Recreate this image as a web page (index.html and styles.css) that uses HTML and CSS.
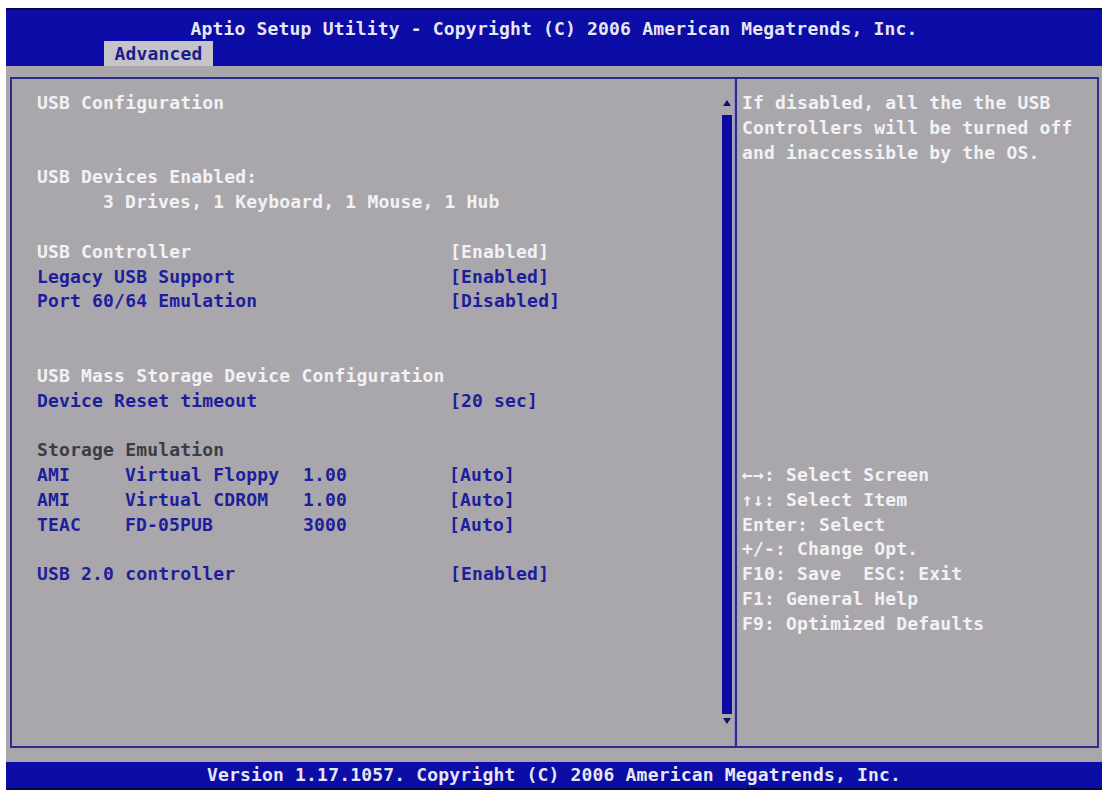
FILE: index.html
```html
<!DOCTYPE html>
<html lang="en">
<head>
    <meta charset="UTF-8">
    <meta name="viewport" content="width=device-width, initial-scale=1.0">
    <title>Aptio Setup Utility - Advanced</title>
    <link rel="stylesheet" href="styles.css">
</head>
<body>
    <div id="screen">
        <div id="titlebar">
            <div class="title">Aptio Setup Utility - Copyright (C) 2006 American Megatrends, Inc.</div>
            <div class="tabs">
                <div class="tab active">Advanced</div>
            </div>
        </div>

        <div id="workspace">
            <div id="frame">
                <div id="menu">
                    <div class="menu-items">
                        <div class="row text-white">USB Configuration</div>

                        <div class="row text-white skip2">USB Devices Enabled:</div>
                        <div class="row text-white indent">3 Drives, 1 Keyboard, 1 Mouse, 1 Hub</div>

                        <div class="row setting text-white skip1">
                            <span>USB Controller</span><span>[Enabled]</span>
                        </div>
                        <div class="row setting text-blue">
                            <span>Legacy USB Support</span><span>[Enabled]</span>
                        </div>
                        <div class="row setting text-blue">
                            <span>Port 60/64 Emulation</span><span>[Disabled]</span>
                        </div>

                        <div class="row text-white skip2">USB Mass Storage Device Configuration</div>
                        <div class="row setting text-blue">
                            <span>Device Reset timeout</span><span>[20 sec]</span>
                        </div>

                        <div class="row text-gray skip1">Storage Emulation</div>
                        <div class="row device text-blue">
                            <span>AMI</span><span>Virtual Floppy</span><span>1.00</span><span>[Auto]</span>
                        </div>
                        <div class="row device text-blue">
                            <span>AMI</span><span>Virtual CDROM</span><span>1.00</span><span>[Auto]</span>
                        </div>
                        <div class="row device text-blue">
                            <span>TEAC</span><span>FD-05PUB</span><span>3000</span><span>[Auto]</span>
                        </div>

                        <div class="row setting text-blue skip1">
                            <span>USB 2.0 controller</span><span>[Enabled]</span>
                        </div>
                    </div>

                    <div class="scrollbar">
                        <div class="arrow-up"></div>
                        <div class="thumb"></div>
                        <div class="arrow-down"></div>
                    </div>
                </div>

                <div id="help">
                    <div class="help-text">
                        <div class="row">If disabled, all the the USB</div>
                        <div class="row">Controllers will be turned off</div>
                        <div class="row">and inaccessible by the OS.</div>
                    </div>
                    <div class="keys">
                        <div class="row">&larr;&rarr;: Select Screen</div>
                        <div class="row">&uarr;&darr;: Select Item</div>
                        <div class="row">Enter: Select</div>
                        <div class="row">+/-: Change Opt.</div>
                        <div class="row">F10: Save  ESC: Exit</div>
                        <div class="row">F1: General Help</div>
                        <div class="row">F9: Optimized Defaults</div>
                    </div>
                </div>
            </div>
        </div>

        <div id="statusbar">Version 1.17.1057. Copyright (C) 2006 American Megatrends, Inc.</div>
    </div>
</body>
</html>
```

FILE: styles.css
```css
:root {
    --line: 24.8px;
    --bios-blue: #0c0ca6;
    --panel: #a9a7ac;
    --frame-line: #2c2c8c;
}

body {
    margin: 0;
    background: #fff;
    font-family: "DejaVu Sans Mono", "Liberation Mono", monospace;
    font-weight: bold;
    font-size: 18px;
    letter-spacing: 0.18px;
}

#screen {
    width: 1096px;
    margin-left: 6px;
    padding-top: 8px;
}

/* top bar */
#titlebar {
    height: 56px;
    background: var(--bios-blue);
    border-top: 2px solid #08084a;
}
#titlebar .title {
    padding-top: 7px;
    line-height: 24px;
    text-align: center;
    color: #e6e6f4;
}
#titlebar .tabs {
    display: flex;
    padding-left: 98px;
}
#titlebar .tab {
    width: 109px;
    height: 25px;
    line-height: 25px;
    text-align: center;
    background: #c5c4c9;
    color: #1c1c8a;
}

/* gray area with the two panes */
#workspace {
    background: var(--panel);
    padding: 11px 3px 14px 4px;
}
#frame {
    display: flex;
    height: 671px;
    box-sizing: border-box;
    border: 2px solid var(--frame-line);
}

.row {
    height: var(--line);
    line-height: var(--line);
    white-space: pre;
}
.skip1 {
    margin-top: var(--line);
}
.skip2 {
    margin-top: calc(var(--line) * 2);
}
.indent {
    padding-left: 66px;
}

.text-white { color: #f2f2f4; }
.text-blue { color: #1e1e9c; }
.text-gray { color: #3c3c44; }

#menu {
    display: flex;
    width: 723px;
    flex-shrink: 0;
}
.menu-items {
    flex: 1;
    padding: 12px 0 0 25px;
}
.setting {
    display: grid;
    grid-template-columns: 413px auto;
}
.device {
    display: grid;
    grid-template-columns: 88px 178px 146px auto;
}

.scrollbar {
    width: 10px;
    margin: 21px 3px 22px 0;
    display: flex;
    flex-direction: column;
    align-items: center;
}
.scrollbar .thumb {
    flex: 1;
    width: 10px;
    margin: 9px 0 4px;
    background: #0a0aa0;
}
.arrow-up,
.arrow-down {
    width: 0;
    height: 0;
    border-left: 4px solid transparent;
    border-right: 4px solid transparent;
}
.arrow-up {
    border-bottom: 6px solid #12125e;
}
.arrow-down {
    border-top: 6px solid #12125e;
}

#help {
    flex: 1;
    border-left: 2px solid var(--frame-line);
    box-shadow: -1px 0 0 #8c8cc8, inset 1px 0 0 #9c9cd0;
    padding: 12px 0 0 5px;
    color: #f2f2f4;
}
#help .keys {
    margin-top: calc(var(--line) * 12);
}

/* bottom bar */
#statusbar {
    height: 26px;
    line-height: 26px;
    background: var(--bios-blue);
    border-bottom: 2px solid #06063a;
    text-align: center;
    color: #e6e6f4;
}
```
